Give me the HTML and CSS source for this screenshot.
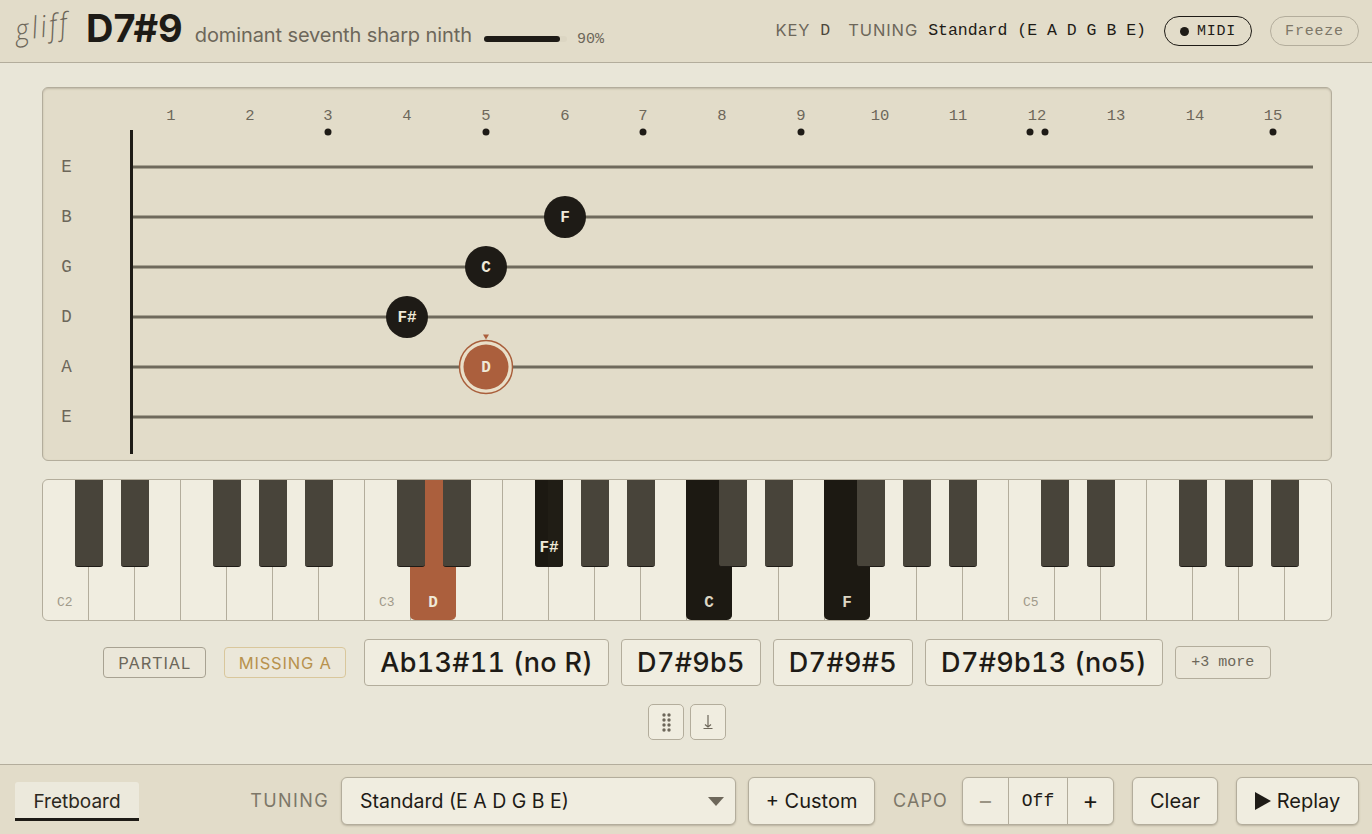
FILE: index.html
```html
<!DOCTYPE html>
<html lang="en">
<head>
    <meta charset="UTF-8">
    <meta name="viewport" content="width=device-width, initial-scale=1.0">
    <title>gliff</title>
    <link rel="stylesheet" href="styles.css">
</head>
<body>

<header class="topbar">
    <div class="topbar-left">
        <span class="logo">gliff</span>
        <h1 class="chord-name">D7#9</h1>
        <span class="chord-desc">dominant seventh sharp ninth</span>
        <span class="confidence"><span class="confidence-fill"></span></span>
        <span class="confidence-num">90%</span>
    </div>
    <div class="topbar-right">
        <span class="meta-label">KEY</span>
        <span class="meta-value meta-key">D</span>
        <span class="meta-label">TUNING</span>
        <span class="meta-value">Standard (E A D G B E)</span>
        <button class="pill pill-midi"><span class="pill-dot"></span>MIDI</button>
        <button class="pill pill-freeze">Freeze</button>
    </div>
</header>

<main class="stage">
    <section class="fretboard">
        <svg class="fret-svg" viewBox="43 88 1288 372" width="1288" height="372">
            <!-- fret numbers -->
            <g class="fret-num">
                <text x="171" y="120">1</text>
                <text x="250" y="120">2</text>
                <text x="328" y="120">3</text>
                <text x="407" y="120">4</text>
                <text x="486" y="120">5</text>
                <text x="565" y="120">6</text>
                <text x="643" y="120">7</text>
                <text x="722" y="120">8</text>
                <text x="801" y="120">9</text>
                <text x="880" y="120">10</text>
                <text x="958" y="120">11</text>
                <text x="1037" y="120">12</text>
                <text x="1116" y="120">13</text>
                <text x="1195" y="120">14</text>
                <text x="1273" y="120">15</text>
            </g>
            <!-- inlays -->
            <g class="inlay">
                <circle cx="328" cy="132" r="3.5"/>
                <circle cx="486" cy="132" r="3.5"/>
                <circle cx="643" cy="132" r="3.5"/>
                <circle cx="801" cy="132" r="3.5"/>
                <circle cx="1030" cy="132" r="3.5"/>
                <circle cx="1045" cy="132" r="3.5"/>
                <circle cx="1273" cy="132" r="3.5"/>
            </g>
            <!-- strings -->
            <g class="string-name">
                <text x="66.500" y="172">E</text>
                <text x="66.500" y="222">B</text>
                <text x="66.500" y="272">G</text>
                <text x="66.500" y="322">D</text>
                <text x="66.500" y="372">A</text>
                <text x="66.500" y="422">E</text>
            </g>
            <g class="string">
                <line x1="132" x2="1313" y1="167" y2="167"/>
                <line x1="132" x2="1313" y1="217" y2="217"/>
                <line x1="132" x2="1313" y1="267" y2="267"/>
                <line x1="132" x2="1313" y1="317" y2="317"/>
                <line x1="132" x2="1313" y1="367" y2="367"/>
                <line x1="132" x2="1313" y1="417" y2="417"/>
            </g>
            <rect class="nut" x="130" y="130" width="3" height="324"/>
            <!-- notes -->
            <circle class="note" cx="565" cy="217" r="21"/>
            <text class="note-text" x="565" y="222">F</text>
            <circle class="note" cx="486" cy="267" r="21"/>
            <text class="note-text" x="486" y="272">C</text>
            <circle class="note" cx="407" cy="317" r="21"/>
            <text class="note-text" x="407" y="322">F#</text>
            <circle class="root-halo" cx="486" cy="367" r="26.5"/>
            <circle class="root" cx="486" cy="367" r="22.5"/>
            <text class="note-text root-text" x="486" y="372">D</text>
            <polygon class="root-mark" points="483,334.500 489,334.500 486,339.500"/>
        </svg>
    </section>

    <section class="piano">
        <div class="wkey"><span class="key-oct">C2</span><span class="bkey"></span></div>
        <div class="wkey"><span class="bkey"></span></div>
        <div class="wkey"></div>
        <div class="wkey"><span class="bkey"></span></div>
        <div class="wkey"><span class="bkey"></span></div>
        <div class="wkey"><span class="bkey"></span></div>
        <div class="wkey"></div>

        <div class="wkey"><span class="key-oct">C3</span><span class="bkey"></span></div>
        <div class="wkey wkey-root"><span class="key-note">D</span><span class="bkey"></span></div>
        <div class="wkey"></div>
        <div class="wkey"><span class="bkey bkey-on"><span class="key-note">F#</span></span></div>
        <div class="wkey"><span class="bkey"></span></div>
        <div class="wkey"><span class="bkey"></span></div>
        <div class="wkey"></div>

        <div class="wkey wkey-on"><span class="key-note">C</span><span class="bkey"></span></div>
        <div class="wkey"><span class="bkey"></span></div>
        <div class="wkey"></div>
        <div class="wkey wkey-on"><span class="key-note">F</span><span class="bkey"></span></div>
        <div class="wkey"><span class="bkey"></span></div>
        <div class="wkey"><span class="bkey"></span></div>
        <div class="wkey"></div>

        <div class="wkey"><span class="key-oct">C5</span><span class="bkey"></span></div>
        <div class="wkey"><span class="bkey"></span></div>
        <div class="wkey"></div>
        <div class="wkey"><span class="bkey"></span></div>
        <div class="wkey"><span class="bkey"></span></div>
        <div class="wkey"><span class="bkey"></span></div>
        <div class="wkey"></div>
    </section>

    <section class="chips">
        <span class="tag tag-partial">PARTIAL</span>
        <span class="tag tag-missing">MISSING A</span>
        <button class="alt">Ab13#11 (no R)</button>
        <button class="alt">D7#9b5</button>
        <button class="alt">D7#9#5</button>
        <button class="alt">D7#9b13 (no5)</button>
        <button class="more">+3 more</button>
    </section>

    <section class="icon-row">
        <button class="icon-btn" aria-label="Fingering">
            <svg width="9" height="19" viewBox="0 0 9 19">
                <g class="icon-dots">
                    <circle cx="2" cy="2" r="1.700"/><circle cx="7" cy="2" r="1.700"/>
                    <circle cx="2" cy="7" r="1.700"/><circle cx="7" cy="7" r="1.700"/>
                    <circle cx="2" cy="12" r="1.700"/><circle cx="7" cy="12" r="1.700"/>
                    <circle cx="2" cy="17" r="1.700"/><circle cx="7" cy="17" r="1.700"/>
                </g>
            </svg>
        </button>
        <button class="icon-btn" aria-label="Download">
            <svg width="10" height="16" viewBox="0 0 10 16">
                <path class="icon-line" d="M5 1V13M2 10.500L5 13L8 10.500M0.500 14.500H9.500"/>
            </svg>
        </button>
    </section>
</main>

<footer class="bottombar">
    <button class="tab">Fretboard</button>
    <div class="controls">
        <span class="ctl-label">TUNING</span>
        <div class="select-wrap">
            <select class="tuning-select">
                <option>Standard (E A D G B E)</option>
            </select>
            <span class="select-arrow"></span>
        </div>
        <button class="ctl-btn btn-custom">+ Custom</button>
        <span class="ctl-label ctl-capo">CAPO</span>
        <div class="stepper">
            <button class="step step-minus">−</button>
            <span class="step-val">Off</span>
            <button class="step step-plus">+</button>
        </div>
        <button class="ctl-btn btn-clear">Clear</button>
        <button class="ctl-btn btn-replay">
            <svg width="16" height="18" viewBox="0 0 16 18"><polygon points="0,0 16,9 0,18"/></svg>
            Replay
        </button>
    </div>
</footer>

</body>
</html>
```

FILE: styles.css
```css
* {
    box-sizing: border-box;
}
body {
    margin: 0;
    width: 1372px;
    height: 834px;
    overflow: hidden;
    background-color: #e9e6d8;
    color: #1e1b16;
    font-family: Inter, "Noto Sans", sans-serif;
}
button, select {
    font-family: inherit;
    color: inherit;
}

/* top bar */
.topbar {
    height: 63px;
    display: flex;
    align-items: center;
    justify-content: space-between;
    padding: 0 13px 0 15px;
    background-color: #e2dcc9;
    border-bottom: 1px solid #b3ad9c;
}
.topbar-left, .topbar-right {
    display: flex;
    align-items: center;
}
.logo {
    width: 54px;
    font-family: "Open Sans", sans-serif;
    font-style: italic;
    font-weight: 300;
    font-size: 30px;
    letter-spacing: 3px;
    color: #6d675a;
    transform: rotate(-8deg) scaleX(0.9);
    transform-origin: left center;
    margin-top: -4px;
}
.chord-name {
    margin: -6px 0 0 17px;
    font-size: 38px;
    font-weight: 700;
    line-height: 1;
}
.chord-desc {
    margin: 8px 0 0 12px;
    font-size: 20px;
    letter-spacing: -0.1px;
    color: #6d675a;
}
.confidence {
    margin: 16px 0 0 12px;
    width: 83px;
    height: 6px;
    border-radius: 3px;
    background-color: #dcd6c3;
}
.confidence-fill {
    display: block;
    width: 76px;
    height: 6px;
    border-radius: 3px;
    background-color: #1e1b16;
}
.confidence-num {
    margin: 16px 0 0 10px;
    font-family: "Liberation Mono", monospace;
    font-size: 15px;
    color: #6d675a;
}
.meta-label {
    font-size: 16.500px;
    letter-spacing: 0.900px;
    color: #6d675a;
    margin-top: -3px;
}
.meta-value {
    margin: -2px 0 0 10px;
    font-family: "Liberation Mono", monospace;
    font-size: 16.500px;
}
.meta-key {
    margin-right: 18px;
    color: #4c473b;
}
.pill {
    height: 30px;
    border-radius: 15px;
    background: transparent;
    font-family: "Liberation Mono", monospace;
    font-size: 15px;
    letter-spacing: 0.800px;
    display: flex;
    align-items: center;
    justify-content: center;
}
.pill-midi {
    width: 88px;
    margin-left: 18px;
    border: 1px solid #1e1b16;
}
.pill-dot {
    width: 9px;
    height: 9px;
    border-radius: 50%;
    background-color: #1e1b16;
    margin-right: 8px;
}
.pill-freeze {
    width: 89px;
    margin-left: 18px;
    border: 1px solid #b3ad9c;
    color: #7d7768;
}

/* main */
.stage {
    height: 701px;
    padding: 24px 40px 0 42px;
    display: flex;
    flex-direction: column;
    gap: 18px;
}
.fretboard {
    height: 374px;
    background-color: #e2dcc9;
    border: 1px solid #b3ad9c;
    border-radius: 6px;
    box-shadow: inset 0 1px 2px rgba(90, 80, 60, 0.25);
}
.fret-svg {
    display: block;
}
.fret-num text {
    font-family: "Liberation Mono", monospace;
    font-size: 15.500px;
    fill: #6d675a;
    text-anchor: middle;
}
.inlay circle {
    fill: #1e1b16;
}
.string-name text {
    font-family: "Liberation Mono", monospace;
    font-size: 17.500px;
    fill: #6d675a;
    text-anchor: middle;
}
.string line {
    stroke: #6f6a5c;
    stroke-width: 3;
}
.nut {
    fill: #1e1b16;
}
.note {
    fill: #1e1b16;
}
.note-text {
    font-family: "Liberation Mono", monospace;
    font-size: 16px;
    font-weight: 700;
    fill: #efe9d8;
    text-anchor: middle;
}
.root-halo {
    fill: #e9dfc9;
    stroke: #a95f3c;
    stroke-width: 1.500;
}
.root {
    fill: #ab5f3d;
}
.root-mark {
    fill: #ab5f3d;
}

/* piano */
.piano {
    height: 142px;
    display: flex;
    border: 1px solid #b3ad9c;
    border-radius: 6px;
    background-color: #f0ede0;
}
.wkey {
    flex: 1;
    position: relative;
    border-right: 1px solid #b3ad9c;
}
.wkey:last-child {
    border-right-color: transparent;
}
.wkey-root, .wkey-on {
    margin-left: -1px;
    margin-right: 1px;
    border-radius: 0 0 5px 5px;
    color: #efe9d8;
}
.wkey-root {
    background-color: #ab5f3d;
    border-right-color: #ab5f3d;
}
.wkey-on {
    background-color: #1c1912;
    border-right-color: #1c1912;
    color: #dcd6c3;
}
.bkey {
    position: absolute;
    z-index: 2;
    top: 0;
    right: -15px;
    width: 28px;
    height: 87px;
    background-color: #48443a;
    border-bottom: 1px solid #1e1b16;
    border-radius: 0 0 3px 3px;
}
.wkey-root .bkey, .wkey-on .bkey {
    right: -16px;
}
.bkey-on {
    background-color: #1c1912;
    background-image: linear-gradient(90deg, transparent 13px, #201d15 13px);
    color: #efe9d8;
}
.key-oct {
    position: absolute;
    left: 14px;
    bottom: 10px;
    font-family: "Liberation Mono", monospace;
    font-size: 13px;
    color: #a09a8a;
}
.key-note {
    position: absolute;
    left: 0;
    right: -1px;
    bottom: 8px;
    text-align: center;
    font-family: "Liberation Mono", monospace;
    font-size: 16px;
    font-weight: 700;
}
.bkey-on .key-note {
    right: 0;
    bottom: 9px;
}

/* chord chips */
.chips {
    height: 47px;
    display: flex;
    align-items: center;
    justify-content: center;
    gap: 12px;
}
.tag {
    height: 31px;
    display: flex;
    align-items: center;
    justify-content: center;
    border-radius: 4px;
    font-size: 16.500px;
    letter-spacing: 0.800px;
    background-color: #ebe7d9;
}
.tag-partial {
    width: 103px;
    border: 1px solid #a8a292;
    color: #6d675a;
}
.tag-missing {
    width: 122px;
    margin: 0 6px 0 6px;
    border: 1px solid #d9c79c;
    color: #b8924e;
}
.alt {
    height: 47px;
    padding: 0 15px;
    border: 1px solid #b3ad9c;
    border-radius: 4px;
    background-color: #f0ede0;
    font-size: 27px;
    font-weight: 550;
    letter-spacing: 0.300px;
    font-variant-numeric: tabular-nums;
}
.more {
    width: 96px;
    height: 33px;
    border: 1px solid #b3ad9c;
    border-radius: 4px;
    background-color: #ebe7d9;
    font-family: "Liberation Mono", monospace;
    font-size: 15px;
    color: #6d675a;
}
.icon-row {
    display: flex;
    justify-content: center;
    gap: 6px;
}
.icon-btn {
    width: 36px;
    height: 36px;
    padding: 0;
    display: flex;
    align-items: center;
    justify-content: center;
    border: 1px solid #b3ad9c;
    border-radius: 5px;
    background-color: #f0ede0;
}
.icon-dots circle {
    fill: #6d675a;
}
.icon-line {
    fill: none;
    stroke: #6d675a;
    stroke-width: 1.200;
}

/* bottom bar */
.bottombar {
    height: 70px;
    display: flex;
    align-items: center;
    justify-content: space-between;
    padding: 2px 13px 0 15px;
    background-color: #e2dcc9;
    border-top: 1px solid #b3ad9c;
}
.tab {
    width: 124px;
    height: 39px;
    margin-top: 1px;
    padding: 3px 0 0;
    border: none;
    border-bottom: 3px solid #1e1b16;
    border-radius: 3px 3px 0 0;
    background-color: #ece9dc;
    font-size: 19px;
    color: #2c2820;
}
.controls {
    display: flex;
    align-items: center;
}
.ctl-label {
    font-size: 18px;
    letter-spacing: 1.400px;
    color: #7d7768;
    margin-right: 12px;
}
.ctl-capo {
    margin: 0 14px 0 18px;
    letter-spacing: 1.100px;
}
.select-wrap {
    position: relative;
    width: 395px;
    height: 48px;
}
.tuning-select {
    width: 100%;
    height: 100%;
    padding: 0 18px;
    appearance: none;
    border: 1px solid #b3ad9c;
    border-radius: 6px;
    background-color: #f0ede0;
    box-shadow: 0 1px 2px rgba(90, 80, 60, 0.3);
    font-size: 19.500px;
}
.select-arrow {
    position: absolute;
    top: 20px;
    right: 12px;
    width: 0;
    height: 0;
    border-left: 8px solid transparent;
    border-right: 8px solid transparent;
    border-top: 9px solid #6d675a;
}
.ctl-btn {
    height: 48px;
    border: 1px solid #b3ad9c;
    border-radius: 6px;
    background-color: #f0ede0;
    box-shadow: 0 1px 2px rgba(90, 80, 60, 0.3);
    font-size: 20px;
    padding: 0;
    display: flex;
    align-items: center;
    justify-content: center;
}
.btn-custom {
    width: 127px;
    margin-left: 12px;
}
.btn-clear {
    width: 86px;
    margin-left: 18px;
}
.btn-replay {
    width: 123px;
    margin-left: 18px;
    gap: 6px;
}
.btn-replay polygon {
    fill: #1e1b16;
}
.stepper {
    width: 152px;
    height: 48px;
    display: flex;
    border: 1px solid #b3ad9c;
    border-radius: 6px;
    background-color: #f0ede0;
    box-shadow: 0 1px 2px rgba(90, 80, 60, 0.3);
}
.step {
    width: 45px;
    padding: 0;
    border: none;
    background: transparent;
    font-size: 24px;
}
.step-minus {
    color: #9a9484;
}
.step-val {
    flex: 1;
    display: flex;
    align-items: center;
    justify-content: center;
    border-left: 1px solid #b3ad9c;
    border-right: 1px solid #b3ad9c;
    font-family: "Liberation Mono", monospace;
    font-size: 18px;
}
```
